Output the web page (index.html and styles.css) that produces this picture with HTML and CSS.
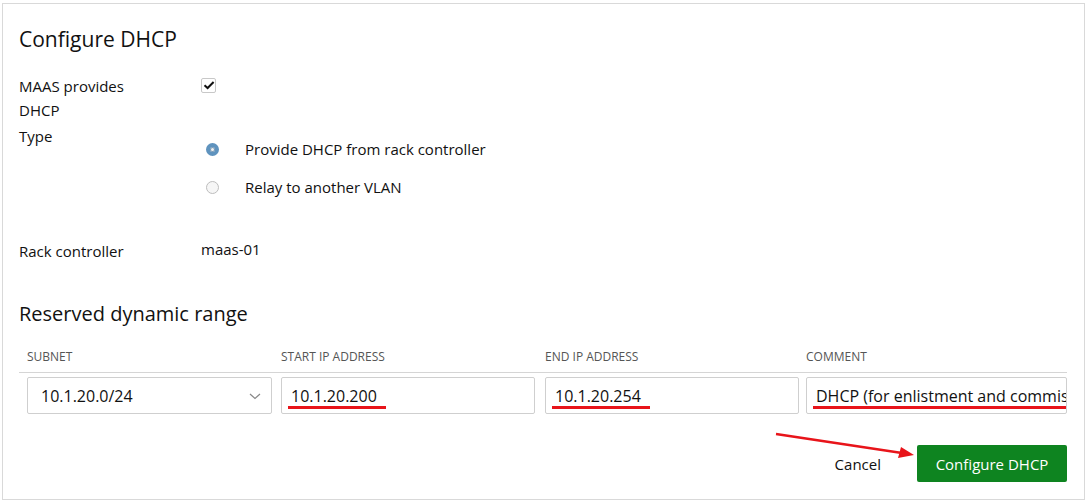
FILE: index.html
```html
<!DOCTYPE html>
<html>
<head>
<meta charset="utf-8">
<link rel="stylesheet" href="styles.css">
</head>
<body>
<div class="card">
  <h2 class="title">Configure DHCP</h2>
  <div class="form">
    <div class="row row-check">
      <div class="label">MAAS provides DHCP</div>
      <div class="value"><span class="checkbox"><svg width="12" height="10" viewBox="0 0 12 10"><path d="M1.5 5.2 L4.6 8 L10.6 2" fill="none" stroke="#111" stroke-width="2"/></svg></span></div>
    </div>
    <div class="row row-type">
      <div class="label">Type</div>
      <div class="value radios">
        <div class="radio-item"><span class="radio on"></span><span>Provide DHCP from rack controller</span></div>
        <div class="radio-item"><span class="radio"></span><span>Relay to another VLAN</span></div>
      </div>
    </div>
    <div class="row row-rack">
      <div class="label">Rack controller</div>
      <div class="value">maas-01</div>
    </div>
  </div>
  <h2 class="title subtitle">Reserved dynamic range</h2>
  <div class="table">
    <div class="thead">
      <div>SUBNET</div><div>START IP ADDRESS</div><div>END IP ADDRESS</div><div>COMMENT</div>
    </div>
    <div class="tbody">
      <div class="field select"><span>10.1.20.0/24</span><svg class="chev" width="12" height="7" viewBox="0 0 12 7"><path d="M1 1 L6 5.5 L11 1" fill="none" stroke="#888" stroke-width="1.2"/></svg></div>
      <div class="field f2"><span class="mark">10.1.20.200</span></div>
      <div class="field f3"><span class="mark">10.1.20.254</span></div>
      <div class="field clip"><span class="mark">DHCP (for enlistment and commissioning)</span></div>
    </div>
  </div>
  <div class="actions">
    <span class="cancel">Cancel</span>
    <span class="btn">Configure DHCP</span>
  </div>
  <svg class="arrow" width="150" height="30" viewBox="0 0 150 30"><line x1="2" y1="3" x2="128" y2="22" stroke="#e8141a" stroke-width="2.5"/><path d="M140 24 L124 27 L127 16 Z" fill="#e8141a"/></svg>
</div>
</body>
</html>
```
FILE: styles.css
```css
* { box-sizing: border-box; }
html, body { margin: 0; padding: 0; background: #fff; }
body {
  font-family: "Open Sans", "Noto Sans", sans-serif;
  color: #111;
  font-size: 15px;
  width: 1088px;
  height: 504px;
  overflow: hidden;
}
.card {
  position: relative;
  margin: 3px 3px 0 2px;
  height: 497px;
  border: 1px solid #d9d9d9;
  padding: 18px 16px 0 16px;
}
.title {
  margin: 0;
  font-size: 21px;
  font-weight: 400;
  line-height: 34px;
}
.form { margin-top: 18px; }
.row { display: grid; grid-template-columns: 182px 1fr; }
.label { line-height: 24px; }
.row-check .label { width: 120px; }
.row-check .value { padding-top: 0; }
.checkbox {
  display: inline-flex; align-items: center; justify-content: center;
  width: 15px; height: 15px; border: 1px solid #c8c8c8; border-radius: 2px; background: #fff;
}
.row-type { margin-top: 2px; }
.radios { padding-top: 1px; display: flex; flex-direction: column; gap: 14px; margin-top: 12px; }
.radio-item { display: flex; align-items: center; line-height: 24px; }
.radio {
  width: 13px; height: 13px; border-radius: 50%;
  border: 1px solid #bdbdbd; background: #f6f6f6;
  margin-left: 5px; margin-right: 26px;
}
.radio.on { border: 4px solid #5f93be; background: #f2f2f2; box-shadow: 0 0 0 1px #7a9ab5 inset; }
.row-rack { margin-top: 40px; }
.subtitle { margin-top: 34px; font-size: 20px; }
.table { margin-top: 15px; margin-right: 1px; }
.thead, .tbody {
  display: grid;
  grid-template-columns: 254px 264px 261px 1fr;
  padding-left: 8px;
}
.thead {
  font-size: 12px; color: #555; text-transform: uppercase;
  border-bottom: 1px solid #d5d5d5;
  line-height: 16px;
  padding-top: 3px; padding-bottom: 7px;
}
.tbody { padding-top: 4px; }
.field {
  height: 37px; border: 1px solid #cfcfcf; border-radius: 2px;
  margin-right: 9px; display: flex; align-items: center;
  padding: 3px 8px 0 9px; font-size: 16px; position: relative;
}
.f2 { margin-right: 10px; }
.f3 { margin-right: 7px; }
.tbody .field:last-child { margin-right: 0; }
.select { padding-left: 13px; justify-content: space-between; padding-right: 10px; padding-top: 1px; }
.clip { overflow: hidden; white-space: nowrap; }
.mark { border-bottom: 3px solid #e8141a; line-height: 20px; padding: 0 9px 0 3px; margin-left: -3px; }
.clip .mark { padding-right: 0; }
.actions {
  display: flex; justify-content: flex-end; align-items: center;
  margin-top: 31px; margin-right: 1px; gap: 36px;
}
.cancel { font-size: 15px; }
.btn {
  background: #0e8420; color: #fff; font-size: 15px;
  height: 37px; width: 150px; display: flex; align-items: center; justify-content: center;
  border-radius: 2px;
}
.arrow { position: absolute; left: 771px; top: 427px; }
```
